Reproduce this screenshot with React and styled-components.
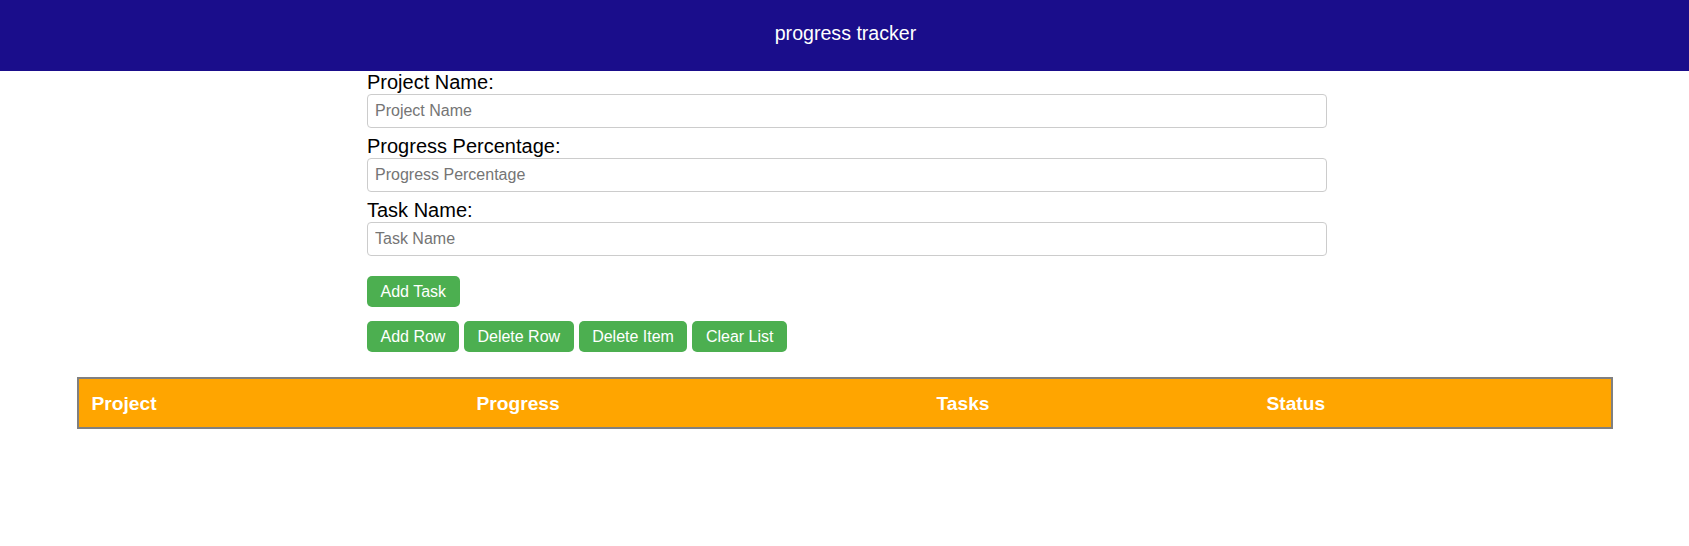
import React from "react";
import styled, { createGlobalStyle } from "styled-components";

const GlobalStyle = createGlobalStyle`
  html, body {
    margin: 0;
    padding: 0;
    background: #ffffff;
    font-family: "Liberation Sans", Arial, sans-serif;
  }
  * { box-sizing: border-box; }
`;

const Header = styled.header`
  height: 71px;
  background: #1a0d8b;
  color: #ffffff;
  display: flex;
  align-items: center;
  justify-content: center;
  padding-left: 2px;
  padding-bottom: 4px;
  font-size: 19.6px;
`;

const FormWrap = styled.div`
  width: 965px;
  margin: 0 auto;
  padding-left: 5px;
  display: flex;
  flex-direction: column;
`;

const Field = styled.div`
  display: flex;
  flex-direction: column;
  margin-bottom: 7px;
`;

const Label = styled.label`
  font-size: 20px;
  line-height: 23px;
  color: #000000;
`;

const Input = styled.input`
  width: 100%;
  height: 34px;
  padding: 0 7px;
  border: 1px solid #cccccc;
  border-radius: 4px;
  font-family: "Liberation Sans", Arial, sans-serif;
  font-size: 16px;
  color: #000;
  &::placeholder { color: #757575; }
`;

const ButtonRow = styled.div`
  display: flex;
  gap: 5px;
  margin-top: ${(p) => p.$top}px;
`;

const Button = styled.button`
  background: #4caf50;
  color: #ffffff;
  border: none;
  border-radius: 5px;
  font-family: "Liberation Sans", Arial, sans-serif;
  font-size: 16px;
  line-height: 18px;
  padding: 6.5px 13.5px;
  cursor: pointer;
`;

const Table = styled.table`
  width: 1536px;
  margin: 25px auto 0;
  border: 2px solid #808080;
  border-collapse: separate;
  border-spacing: 0;
  background: #ffa500;
`;

const Th = styled.th`
  width: ${(p) => p.$w}px;
  text-align: left;
  color: #ffffff;
  font-weight: bold;
  font-size: 19.2px;
  line-height: 23px;
  padding: 12.5px 13px;
`;

const columns = [
  { name: "Project", w: 385 },
  { name: "Progress", w: 460 },
  { name: "Tasks", w: 330 },
  { name: "Status", w: 357 },
];

const fields = ["Project Name", "Progress Percentage", "Task Name"];

export default function App() {
  return (
    <>
      <GlobalStyle />
      <Header>progress tracker</Header>
      <FormWrap>
        {fields.map((f) => (
          <Field key={f}>
            <Label>{f}:</Label>
            <Input placeholder={f} />
          </Field>
        ))}
        <ButtonRow $top={13}>
          <Button>Add Task</Button>
        </ButtonRow>
        <ButtonRow $top={14}>
          <Button>Add Row</Button>
          <Button>Delete Row</Button>
          <Button>Delete Item</Button>
          <Button>Clear List</Button>
        </ButtonRow>
      </FormWrap>
      <Table>
        <thead>
          <tr>
            {columns.map((c) => (
              <Th key={c.name} $w={c.w}>{c.name}</Th>
            ))}
          </tr>
        </thead>
        <tbody />
      </Table>
    </>
  );
}
